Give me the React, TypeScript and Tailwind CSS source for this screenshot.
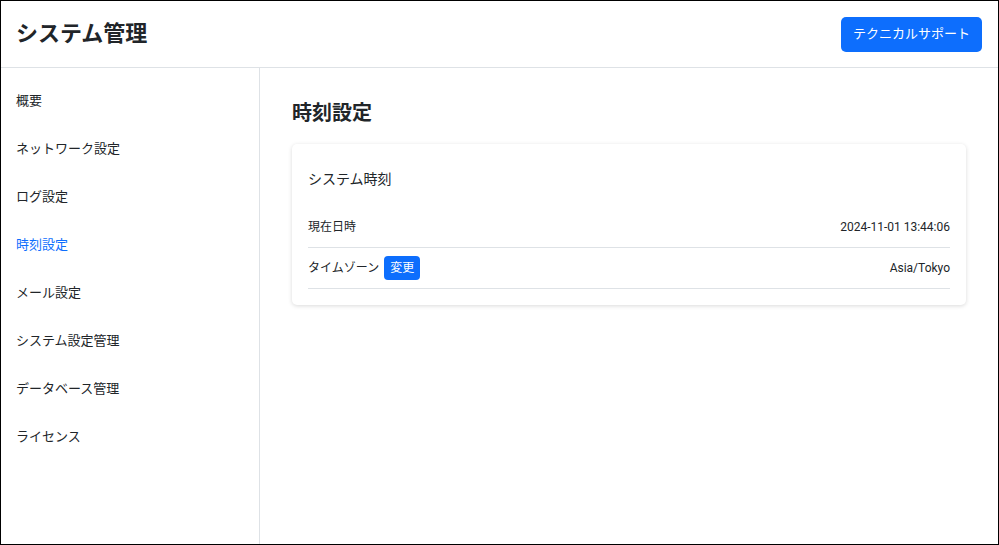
const NAV = [
  { label: '概要', active: false },
  { label: 'ネットワーク設定', active: false },
  { label: 'ログ設定', active: false },
  { label: '時刻設定', active: true },
  { label: 'メール設定', active: false },
  { label: 'システム設定管理', active: false },
  { label: 'データベース管理', active: false },
  { label: 'ライセンス', active: false },
]

const font = { fontFamily: 'Roboto, "Noto Sans CJK JP", sans-serif' }

function InfoRow({ label, value, badge }: { label: string; value: string; badge?: string }) {
  return (
    <div className="flex h-[41px] items-center justify-between border-b border-[#dee2e6] text-[12px] text-[#212529]">
      <div className="flex items-center gap-[5px]">
        <span>{label}</span>
        {badge && (
          <span className="flex h-[24px] items-center rounded-[4px] bg-[#0d6efd] px-[6px] text-[12px] text-white">{badge}</span>
        )}
      </div>
      <span>{value}</span>
    </div>
  )
}

export default function App() {
  return (
    <div className="flex h-screen w-full flex-col overflow-hidden border border-black bg-white text-[#212529]" style={font}>
      {/* header */}
      <header className="flex h-[67px] shrink-0 items-center justify-between border-b border-[#dee2e6] pl-[15px] pr-4">
        <h1 className="text-[22px] font-bold leading-none text-[#212529]">システム管理</h1>
        <button className="h-[35px] rounded-[5px] bg-[#0d6efd] px-3 text-[13px] text-white">テクニカルサポート</button>
      </header>

      <div className="flex min-h-0 flex-1">
        {/* sidebar */}
        <nav className="w-[259px] shrink-0 border-r border-[#dee2e6] pt-[9px]">
          {NAV.map(n => (
            <div key={n.label} className={`px-[15px] py-3 text-[13px] leading-[24px] ${n.active ? 'text-[#0d6efd]' : 'text-[#212529]'}`}>
              {n.label}
            </div>
          ))}
        </nav>

        {/* main */}
        <main className="flex-1 px-8 pt-[31px]">
          <h2 className="mb-[17px] text-[20px] font-bold leading-[28px]">時刻設定</h2>
          <div className="rounded-[5px] bg-white px-4 pb-4 pt-[23px] shadow-[0_1px_4px_rgba(0,0,0,0.15)]">
            <div className="mb-4 text-[14px] leading-[24px]">システム時刻</div>
            <InfoRow label="現在日時" value="2024-11-01 13:44:06" />
            <InfoRow label="タイムゾーン" value="Asia/Tokyo" badge="変更" />
          </div>
        </main>
      </div>
    </div>
  )
}
